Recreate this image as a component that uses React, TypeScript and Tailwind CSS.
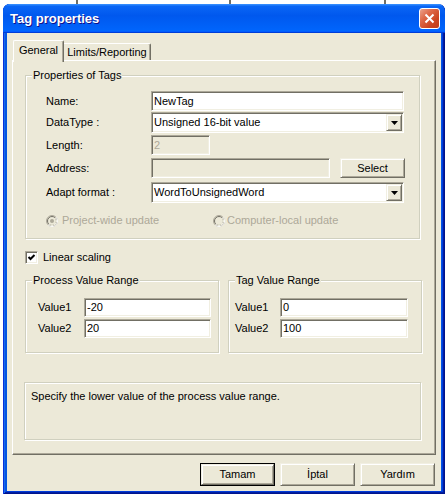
import React from "react";

type Props = { className?: string; children?: React.ReactNode };

// classic sunken edit box
function Sunken({ className = "", children, disabled = false }: Props & { disabled?: boolean }) {
  return (
    <div
      className={`flex items-center border border-t-[#ACA899] border-l-[#ACA899] border-r-white border-b-white shadow-[inset_1px_1px_0_#716F64,inset_-1px_-1px_0_#F1EFE2] ${
        disabled ? "bg-[#ECE9D8] text-[#ACA899]" : "bg-white text-black"
      } ${className}`}
    >
      {children}
    </div>
  );
}

// classic raised button face
function Raised({ className = "", children }: Props) {
  return (
    <div
      className={`flex items-center justify-center bg-[#ECE9D8] border border-t-[#F1EFE2] border-l-[#F1EFE2] border-r-[#716F64] border-b-[#716F64] shadow-[inset_1px_1px_0_#fff,inset_-1px_-1px_0_#ACA899] ${className}`}
    >
      {children}
    </div>
  );
}

function Group({ title, className = "", bodyClass = "", children }: Props & { title?: string; bodyClass?: string }) {
  return (
    <div className={`flex flex-col border border-[#D0D0BF] shadow-[inset_1px_1px_0_#fff,1px_1px_0_#fff] ${className}`}>
      {title && <div className="-mt-[7px] ml-[6px] w-fit px-[1px] bg-[#ECE9D8] leading-[13px]">{title}</div>}
      <div className={`flex flex-col ${bodyClass}`}>{children}</div>
    </div>
  );
}

function Combo({ value }: { value: string }) {
  return (
    <Sunken className="w-[253px] h-[21px] pr-[1px]">
      <span className="flex-1 pl-[2px] leading-[13px]">{value}</span>
      <Raised className="w-[16px] h-[17px]">
        <svg width="7" height="4" viewBox="0 0 7 4">
          <path d="M0 0h7L3.5 4z" fill="#000" />
        </svg>
      </Raised>
    </Sunken>
  );
}

function Radio({ checked }: { checked?: boolean }) {
  return (
    <svg width="12" height="12" viewBox="0 0 12 12">
      <circle cx="6" cy="6" r="5.5" fill="#ECE9D8" stroke="#ACA899" />
      <path d="M2.11 9.89 A5.5 5.5 0 0 0 9.89 2.11" fill="none" stroke="#fff" />
      <circle cx="6" cy="6" r="4.5" fill="none" stroke="#716F64" />
      <path d="M2.82 9.18 A4.5 4.5 0 0 0 9.18 2.82" fill="none" stroke="#F1EFE2" />
      {checked && <circle cx="6" cy="6" r="2" fill="#ACA899" />}
    </svg>
  );
}

function ValueRow({ label, value, labelW, inputW, first }: { label: string; value: string; labelW: string; inputW: string; first?: boolean }) {
  return (
    <div className={`flex items-center ${first ? "mt-[11px]" : "mt-[2px]"}`}>
      <span className={labelW}>{label}</span>
      <Sunken className={`${inputW} h-[19px]`}>
        <span className="pl-[2px] leading-[13px]">{value}</span>
      </Sunken>
    </div>
  );
}

export default function App() {
  return (
    <div className="w-[448px] h-[496px] bg-white overflow-hidden font-['Liberation_Sans',Arial,sans-serif] text-[11px] text-black">
      {/* list header peeking out behind the dialog */}
      <div className="flex h-[4px]">
        <div className="w-[76px]" />
        <div className="w-[2px] bg-[#716F64]" />
        <div className="w-[151px]" />
        <div className="w-[2px] bg-[#716F64]" />
        <div className="w-[153px]" />
        <div className="w-[2px] bg-[#716F64]" />
      </div>

      <div className="ml-[3px] w-[442px] h-[490px] flex flex-col rounded-t-[7px] bg-[#0055E5] shadow-[inset_1px_0_0_#0831D9,inset_-1px_-1px_0_#00138C,inset_2px_0_0_#166AEE,inset_-2px_-2px_0_#001EA0,inset_3px_0_0_#0855DD,inset_-3px_-3px_0_#003BDA]">
        {/* title bar */}
        <div className="h-[29px] flex items-center justify-between pl-[7px] pr-[5px] rounded-t-[7px] bg-[linear-gradient(180deg,#3D95FF,#0A66F5_8%,#0058EE_40%,#0064FB_88%,#0066FF_93%,#005BFF_95%,#003DD7_96%,#003DD7)]">
          <span className="text-white font-bold text-[13px] [text-shadow:1px_1px_#0F1089]">Tag properties</span>
          <div className="w-[21px] h-[21px] rounded-[3px] border border-white flex items-center justify-center bg-[linear-gradient(135deg,#EBA38D_0%,#DE6847_35%,#CC4520_70%,#C13C17_100%)]">
            <svg width="11" height="11" viewBox="0 0 11 11">
              <path d="M1.5 1.5L9.5 9.5M9.5 1.5L1.5 9.5" stroke="#fff" strokeWidth="2" />
            </svg>
          </div>
        </div>

        {/* client area */}
        <div className="mx-[4px] w-[434px] h-[458px] bg-[#ECE9D8] flex flex-col px-[5px] pt-[7px]">
          {/* tabs */}
          <div className="flex items-start h-[22px] -mb-[2px] ml-[1px]">
            <div className="relative z-10 w-[51px] h-[22px] bg-[#ECE9D8] border-t border-l border-r border-t-white border-l-white border-r-[#716F64] shadow-[inset_-1px_0_0_#ACA899] rounded-t-[2px] flex justify-center pt-[3px] leading-[13px]">
              General
            </div>
            <div className="mt-[3px] w-[87px] h-[17px] bg-[#ECE9D8] border-t border-r border-t-white border-r-[#716F64] shadow-[inset_-1px_0_0_#ACA899] rounded-tr-[2px] flex justify-center pt-[2px] leading-[13px]">
              Limits/Reporting
            </div>
          </div>

          {/* tab page */}
          <div className="w-[424px] h-[395px] flex flex-col border border-t-white border-l-white border-r-[#716F64] border-b-[#716F64] shadow-[inset_-1px_-1px_0_#ACA899]">
            <Group title="Properties of Tags" className="mt-[14px] ml-[12px] w-[395px] h-[164px]" bodyClass="pl-[20px]">
              <div className="flex items-center mt-[9px] h-[20px]">
                <span className="w-[105px]">Name:</span>
                <Sunken className="w-[253px] h-[20px]">
                  <span className="pl-[2px] leading-[13px]">NewTag</span>
                </Sunken>
              </div>
              <div className="flex items-center mt-[1px] h-[21px]">
                <span className="w-[105px]">DataType :</span>
                <Combo value="Unsigned 16-bit value" />
              </div>
              <div className="flex items-center mt-[2px] h-[20px]">
                <span className="w-[105px]">Length:</span>
                <Sunken disabled className="w-[59px] h-[20px]">
                  <span className="pl-[2px] leading-[13px]">2</span>
                </Sunken>
              </div>
              <div className="flex items-center mt-[3px] h-[20px]">
                <span className="w-[105px]">Address:</span>
                <Sunken disabled className="w-[179px] h-[20px]" />
                <Raised className="ml-[10px] w-[65px] h-[20px]">Select</Raised>
              </div>
              <div className="flex items-center mt-[4px] h-[21px]">
                <span className="w-[105px]">Adapt format :</span>
                <Combo value="WordToUnsignedWord" />
              </div>
              <div className="flex items-center mt-[11px] h-[13px] text-[#ACA899]">
                <div className="w-[167px] flex items-center gap-[4px]">
                  <Radio checked />
                  <span>Project-wide update</span>
                </div>
                <div className="flex items-center gap-[2px]">
                  <Radio />
                  <span>Computer-local update</span>
                </div>
              </div>
            </Group>

            <div className="flex items-center mt-[12px] ml-[12px] h-[13px] gap-[5px]">
              <div className="w-[13px] h-[13px] bg-white border border-t-[#ACA899] border-l-[#ACA899] border-r-white border-b-white shadow-[inset_1px_1px_0_#716F64,inset_-1px_-1px_0_#F1EFE2] flex items-center justify-center">
                <svg width="9" height="9" viewBox="0 0 9 9">
                  <path d="M1.5 4L3.5 6L7.5 2" fill="none" stroke="#000" strokeWidth="2" />
                </svg>
              </div>
              <span>Linear scaling</span>
            </div>

            <div className="flex mt-[16px] ml-[12px] gap-[9px]">
              <Group title="Process Value Range" className="w-[194px] h-[73px]" bodyClass="pl-[12px]">
                <ValueRow first label="Value1" value="-20" labelW="w-[46px]" inputW="w-[127px]" />
                <ValueRow label="Value2" value="20" labelW="w-[46px]" inputW="w-[127px]" />
              </Group>
              <Group title="Tag Value Range" className="w-[194px] h-[73px]" bodyClass="pl-[6px]">
                <ValueRow first label="Value1" value="0" labelW="w-[45px]" inputW="w-[128px]" />
                <ValueRow label="Value2" value="100" labelW="w-[45px]" inputW="w-[128px]" />
              </Group>
            </div>

            <Group className="mt-[29px] ml-[11px] w-[397px] h-[58px]" bodyClass="pl-[6px] pt-[7px]">
              <span className="leading-[13px]">Specify the lower value of the process value range.</span>
            </Group>
          </div>

          {/* dialog buttons */}
          <div className="flex justify-end gap-[5px] mt-[8px] mr-[1px]">
            <div className="w-[75px] h-[23px] border border-black flex">
              <Raised className="flex-1">Tamam</Raised>
            </div>
            <Raised className="w-[75px] h-[23px]">İptal</Raised>
            <Raised className="w-[75px] h-[23px]">Yardım</Raised>
          </div>
        </div>
      </div>
    </div>
  );
}
